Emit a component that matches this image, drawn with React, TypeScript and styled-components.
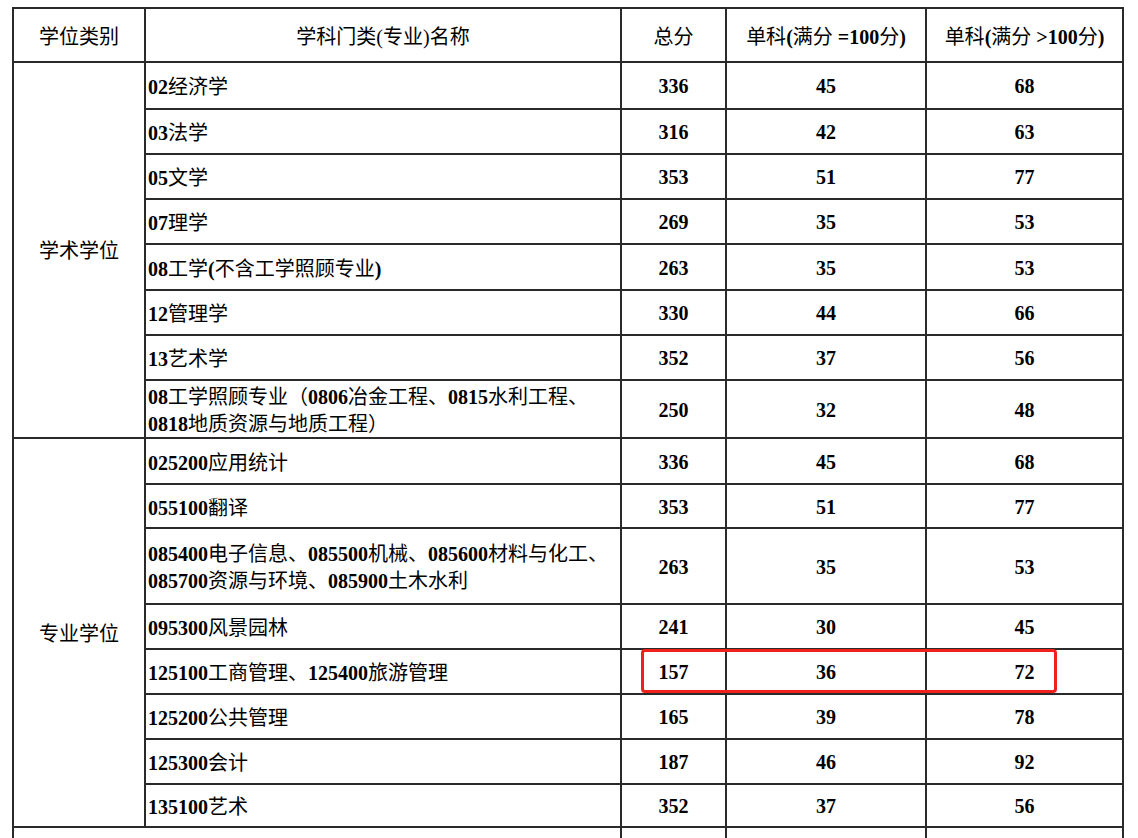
import React from "react";
import styled, { createGlobalStyle } from "styled-components";

const Global = createGlobalStyle`
  html, body {
    margin: 0;
    padding: 0;
    background: #ffffff;
    overflow: hidden;
  }
`;

const Page = styled.div`
  width: 1138px;
  height: 838px;
  overflow: hidden;
  box-sizing: border-box;
  padding: 7px 0 0 12px;
  background: #fff;
`;

const Table = styled.table`
  border-collapse: collapse;
  table-layout: fixed;
  width: 1110px;
  font-size: 20px;
  color: #000;
`;

const HeadCell = styled.th`
  border: 2px solid #2a2a2a;
  height: 50px;
  padding: 2px 0 0 0;
  font-weight: 400;
  text-align: center;
  vertical-align: middle;
  white-space: nowrap;
  line-height: 25px;
`;

const GroupCell = styled.td`
  border: 2px solid #2a2a2a;
  padding: 1px 0 0 0;
  text-align: center;
  vertical-align: middle;
  line-height: 25px;
`;

const NameCell = styled.td<{ $h: number }>`
  border: 2px solid #2a2a2a;
  height: ${(p) => p.$h}px;
  padding: 2px 0 0 2px;
  text-align: left;
  vertical-align: middle;
  white-space: nowrap;
  line-height: 25px;
`;

const NumCell = styled.td<{ $mark?: boolean }>`
  border: 2px solid #2a2a2a;
  padding: 2px 0 0 0;
  text-align: center;
  vertical-align: middle;
  line-height: 25px;
  position: ${(p) => (p.$mark ? "relative" : "static")};
`;

const BlankCell = styled.td`
  border: 2px solid #2a2a2a;
  height: 45px;
  padding: 0;
`;

const Latin = styled.span<{ $bold?: boolean }>`
  font-family: "Liberation Serif", "Times New Roman", serif;
  font-weight: ${(p) => (p.$bold ? 700 : 400)};
`;

const Han = styled.span`
  font-family: "Noto Sans CJK SC", "Noto Sans", sans-serif;
  font-weight: 400;
`;

const Highlight = styled.div`
  position: absolute;
  left: 19px;
  top: -1px;
  width: 416px;
  height: 44px;
  box-sizing: border-box;
  border: 3px solid #f0201c;
  border-radius: 4px;
  pointer-events: none;
`;

function Mixed({ text, bold = true }: { text: string; bold?: boolean }) {
  const parts = text.split(/([\x00-\x7F]+)/).filter((s) => s.length > 0);
  return (
    <>
      {parts.map((p, i) =>
        /^[\x00-\x7F]+$/.test(p) ? (
          <Latin key={i} $bold={bold}>
            {p}
          </Latin>
        ) : (
          <Han key={i}>{p}</Han>
        )
      )}
    </>
  );
}

type Row = {
  name: string[];
  total: number;
  a: number;
  b: number;
  h: number;
  mark?: boolean;
};

const academic: Row[] = [
  { name: ["02经济学"], total: 336, a: 45, b: 68, h: 43 },
  { name: ["03法学"], total: 316, a: 42, b: 63, h: 41 },
  { name: ["05文学"], total: 353, a: 51, b: 77, h: 41 },
  { name: ["07理学"], total: 269, a: 35, b: 53, h: 41 },
  { name: ["08工学(不含工学照顾专业)"], total: 263, a: 35, b: 53, h: 42 },
  { name: ["12管理学"], total: 330, a: 44, b: 66, h: 41 },
  { name: ["13艺术学"], total: 352, a: 37, b: 56, h: 41 },
  {
    name: ["08工学照顾专业（0806冶金工程、0815水利工程、", "0818地质资源与地质工程）"],
    total: 250,
    a: 32,
    b: 48,
    h: 54,
  },
];

const professional: Row[] = [
  { name: ["025200应用统计"], total: 336, a: 45, b: 68, h: 42 },
  { name: ["055100翻译"], total: 353, a: 51, b: 77, h: 40 },
  {
    name: ["085400电子信息、085500机械、085600材料与化工、", "085700资源与环境、085900土木水利"],
    total: 263,
    a: 35,
    b: 53,
    h: 72,
  },
  { name: ["095300风景园林"], total: 241, a: 30, b: 45, h: 41 },
  { name: ["125100工商管理、125400旅游管理"], total: 157, a: 36, b: 72, h: 41, mark: true },
  { name: ["125200公共管理"], total: 165, a: 39, b: 78, h: 41 },
  { name: ["125300会计"], total: 187, a: 46, b: 92, h: 41 },
  { name: ["135100艺术"], total: 352, a: 37, b: 56, h: 39 },
];

function DataRows({ group, rows }: { group: string; rows: Row[] }) {
  return (
    <>
      {rows.map((r, i) => (
        <tr key={i}>
          {i === 0 && (
            <GroupCell rowSpan={rows.length}>
              <Han>{group}</Han>
            </GroupCell>
          )}
          <NameCell $h={r.h}>
            {r.name.map((line, j) => (
              <React.Fragment key={j}>
                {j > 0 && <br />}
                <Mixed text={line} />
              </React.Fragment>
            ))}
          </NameCell>
          <NumCell $mark={r.mark}>
            <Latin $bold>{r.total}</Latin>
            {r.mark && <Highlight />}
          </NumCell>
          <NumCell>
            <Latin $bold>{r.a}</Latin>
          </NumCell>
          <NumCell>
            <Latin $bold>{r.b}</Latin>
          </NumCell>
        </tr>
      ))}
    </>
  );
}

export default function App() {
  return (
    <>
      <Global />
      <Page>
        <Table>
          <colgroup>
            <col style={{ width: 132 }} />
            <col style={{ width: 476 }} />
            <col style={{ width: 105 }} />
            <col style={{ width: 200 }} />
            <col style={{ width: 197 }} />
          </colgroup>
          <thead>
            <tr>
              <HeadCell>
                <Han>学位类别</Han>
              </HeadCell>
              <HeadCell>
                <Mixed text="学科门类(专业)名称" bold={false} />
              </HeadCell>
              <HeadCell>
                <Han>总分</Han>
              </HeadCell>
              <HeadCell>
                <Mixed text="单科(满分 =100分)" />
              </HeadCell>
              <HeadCell>
                <Mixed text="单科(满分 >100分)" />
              </HeadCell>
            </tr>
          </thead>
          <tbody>
            <DataRows group="学术学位" rows={academic} />
            <DataRows group="专业学位" rows={professional} />
            <tr>
              <BlankCell colSpan={2} />
              <BlankCell />
              <BlankCell />
              <BlankCell />
            </tr>
          </tbody>
        </Table>
      </Page>
    </>
  );
}
